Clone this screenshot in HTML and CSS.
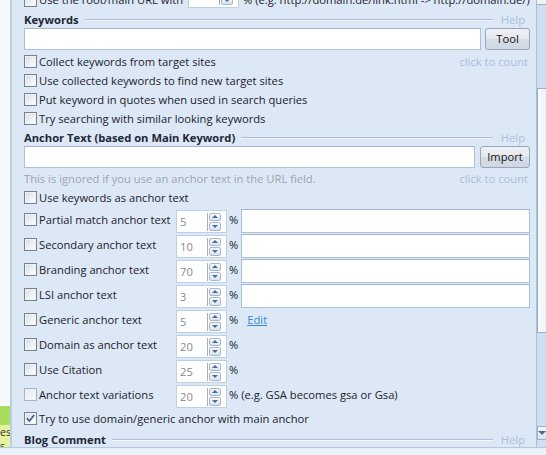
FILE: index.html
```html
<!DOCTYPE html>
<html lang="en">
<head>
    <meta charset="UTF-8">
    <title>Project Options - Data</title>
    <link rel="stylesheet" href="styles.css">
</head>
<body>
    <div class="window">
        <div class="side">
            <div class="side-green"></div>
            <div class="side-yellow">
                <span class="side-line">es</span>
                <span class="side-line">s</span>
            </div>
        </div>

        <div class="panel">
            <div class="scroll">
                <div class="top-row">
                    <label class="check top-label"><span class="box"></span>Use the root/main URL with</label>
                    <span class="spin spin-narrow">
                        <span class="spin-value">50</span>
                        <span class="spin-btns"><span class="spin-up"></span><span class="spin-down"></span></span>
                    </span>
                    <span class="top-hint">% (e.g. http://domain.de/link.html -&gt; http://domain.de/)</span>
                </div>

                <!-- Keywords -->
                <div class="section-head">
                    <span class="section-title">Keywords</span>
                    <span class="rule"></span>
                    <span class="help">Help</span>
                </div>
                <div class="field-row">
                    <input class="text-input" type="text">
                    <button class="btn">Tool</button>
                </div>
                <div class="check-row first-row">
                    <label class="check"><span class="box"></span>Collect keywords from target sites</label>
                    <span class="count">click to count</span>
                </div>
                <div class="check-row">
                    <label class="check"><span class="box"></span>Use collected keywords to find new target sites</label>
                </div>
                <div class="check-row">
                    <label class="check"><span class="box"></span>Put keyword in quotes when used in search queries</label>
                </div>
                <div class="check-row">
                    <label class="check"><span class="box"></span>Try searching with similar looking keywords</label>
                </div>

                <!-- Anchor text -->
                <div class="section-head head-gap">
                    <span class="section-title">Anchor Text (based on Main Keyword)</span>
                    <span class="rule"></span>
                    <span class="help">Help</span>
                </div>
                <div class="field-row field-wide-gap">
                    <input class="text-input" type="text">
                    <button class="btn btn-import">Import</button>
                </div>
                <div class="check-row note-row">
                    <span class="note">This is ignored if you use an anchor text in the URL field.</span>
                    <span class="count">click to count</span>
                </div>
                <div class="check-row">
                    <label class="check"><span class="box"></span>Use keywords as anchor text</label>
                </div>

                <div class="spin-row">
                    <label class="check"><span class="box"></span>Partial match anchor text</label>
                    <span class="spin"><span class="spin-value">5</span><span class="spin-btns"><span class="spin-up"></span><span class="spin-down"></span></span></span>
                    <span class="pct">%</span>
                    <input class="wide-input" type="text">
                </div>
                <div class="spin-row">
                    <label class="check"><span class="box"></span>Secondary anchor text</label>
                    <span class="spin"><span class="spin-value">10</span><span class="spin-btns"><span class="spin-up"></span><span class="spin-down"></span></span></span>
                    <span class="pct">%</span>
                    <input class="wide-input" type="text">
                </div>
                <div class="spin-row">
                    <label class="check"><span class="box"></span>Branding anchor text</label>
                    <span class="spin"><span class="spin-value">70</span><span class="spin-btns"><span class="spin-up"></span><span class="spin-down"></span></span></span>
                    <span class="pct">%</span>
                    <input class="wide-input" type="text">
                </div>
                <div class="spin-row">
                    <label class="check"><span class="box"></span>LSI anchor text</label>
                    <span class="spin"><span class="spin-value">3</span><span class="spin-btns"><span class="spin-up"></span><span class="spin-down"></span></span></span>
                    <span class="pct">%</span>
                    <input class="wide-input" type="text">
                </div>
                <div class="spin-row">
                    <label class="check"><span class="box"></span>Generic anchor text</label>
                    <span class="spin"><span class="spin-value">5</span><span class="spin-btns"><span class="spin-up"></span><span class="spin-down"></span></span></span>
                    <span class="pct">%</span>
                    <a class="link" href="#">Edit</a>
                </div>
                <div class="spin-row">
                    <label class="check"><span class="box"></span>Domain as anchor text</label>
                    <span class="spin"><span class="spin-value">20</span><span class="spin-btns"><span class="spin-up"></span><span class="spin-down"></span></span></span>
                    <span class="pct">%</span>
                </div>
                <div class="spin-row">
                    <label class="check"><span class="box"></span>Use Citation</label>
                    <span class="spin"><span class="spin-value">25</span><span class="spin-btns"><span class="spin-up"></span><span class="spin-down"></span></span></span>
                    <span class="pct">%</span>
                </div>
                <div class="spin-row">
                    <label class="check"><span class="box box-faint"></span>Anchor text variations</label>
                    <span class="spin"><span class="spin-value">20</span><span class="spin-btns"><span class="spin-up"></span><span class="spin-down"></span></span></span>
                    <span class="pct">% (e.g. GSA becomes gsa or Gsa)</span>
                </div>

                <div class="check-row checked-row">
                    <label class="check">
                        <span class="box">
                            <svg width="11" height="11" viewBox="0 0 11 11"><path d="M1.8 5.2 L4.4 8 L9.2 2" fill="none" stroke="#3a5d98" stroke-width="1.7"/></svg>
                        </span>Try to use domain/generic anchor with main anchor
                    </label>
                </div>

                <!-- Blog comment -->
                <div class="section-head blog-head">
                    <span class="section-title">Blog Comment</span>
                    <span class="rule"></span>
                    <span class="help">Help</span>
                </div>
            </div>
        </div>

        <div class="scrollbar">
            <div class="sb-up"></div>
            <div class="sb-track-top"></div>
            <div class="sb-thumb"></div>
            <div class="sb-track"></div>
            <div class="sb-down"><span class="sb-arrow"></span></div>
            <div class="sb-end"></div>
        </div>
    </div>
    <div class="bottom"></div>
</body>
</html>
```

FILE: styles.css
```css
* {
    margin: 0;
    padding: 0;
    box-sizing: border-box;
}

body {
    width: 546px;
    height: 455px;
    overflow: hidden;
    font-family: 'Open Sans', 'Noto Sans', sans-serif;
    font-size: 11.2px;
    line-height: 16px;
    color: #1c2129;
    background: #ebf1f9;
    display: flex;
    flex-direction: column;
}

.window {
    height: 447px;
    display: flex;
    overflow: hidden;
}

/* left strip (neighbouring list, mostly hidden) */
.side {
    width: 12px;
    background: #f6f8fc;
    border-right: 2px solid #bccde4;
    display: flex;
    flex-direction: column;
    justify-content: flex-end;
    overflow: hidden;
}

.side-green {
    height: 19px;
    background: #a8dc5c;
}

.side-yellow {
    height: 22px;
    background: #e5f29e;
    font-size: 10.5px;
    color: #2b2f20;
    display: flex;
    flex-direction: column;
    white-space: nowrap;
    overflow: hidden;
}

.side-line {
    height: 14px;
    line-height: 14px;
    flex: none;
    overflow: hidden;
}

.panel {
    flex: 1;
    background: #dde8f6;
    padding: 0 6px 0 12px;
    overflow: hidden;
}

.scroll {
    margin-top: -11px;
}

.top-row {
    height: 22px;
    display: flex;
    align-items: center;
}

.top-label {
    width: 164px;
}

.top-row .spin {
    margin: 0 0 8px 0;
}

.spin-narrow {
    width: 46px;
}

.top-hint {
    margin-left: 4px;
    white-space: nowrap;
}

/* section headers */
.section-head {
    height: 16px;
    margin-top: 1px;
    display: flex;
    align-items: center;
}

.head-gap {
    margin-top: 2px;
}

.blog-head {
    margin-top: 4px;
}

.section-title {
    font-weight: 700;
    color: #1d2736;
    white-space: nowrap;
}

.rule {
    flex: 1;
    height: 2px;
    border-top: 1px solid #a9c1de;
    border-bottom: 1px solid #f0f5fc;
    margin: 0 8px 0 6px;
}

.help {
    color: #a9bfdc;
    margin-right: 5px;
}

/* inputs and buttons */
.field-row {
    height: 22px;
    display: flex;
    gap: 4px;
}

.field-wide-gap {
    gap: 5px;
}

.text-input,
.wide-input {
    flex: 1;
    min-width: 0;
    height: 22px;
    border: 1px solid #abc1da;
    border-top-color: #9fb5d0;
    background: #fff;
    font: inherit;
    outline: none;
}

.btn {
    width: 45px;
    height: 22px;
    border: 1px solid #98a7ba;
    border-radius: 3px;
    background: linear-gradient(#eef1f5 0%, #e4e9ef 48%, #d6dde7 52%, #cfd7e2 100%);
    font: inherit;
    color: #141414;
    padding-bottom: 1px;
}

.btn-import {
    width: 50px;
}

/* checkbox rows */
.check-row {
    height: 19px;
    display: flex;
    align-items: center;
    justify-content: space-between;
}

.first-row {
    margin-top: 2px;
}

.note-row {
    margin-top: 1px;
}

.checked-row {
    margin-top: 2px;
}

.check {
    display: flex;
    align-items: center;
    gap: 2px;
    white-space: nowrap;
}

.box {
    width: 13px;
    height: 13px;
    flex: none;
    border: 1px solid #77838f;
    background: linear-gradient(135deg, #d6dde6 0%, #eef1f5 55%, #ffffff 100%);
    box-shadow: inset 0 0 0 1px #eef2f6;
    display: flex;
    align-items: center;
    justify-content: center;
}

.box-faint {
    border-color: #aab4c1;
    background: linear-gradient(135deg, #e6eaf0 0%, #f7f9fb 100%);
}

.count {
    color: #a8bedb;
    margin-right: 2px;
}

.note {
    color: #9ea5ad;
}

/* spin rows */
.spin-row {
    height: 25px;
    display: flex;
    align-items: flex-start;
}

.spin-row .check {
    width: 152px;
    height: 25px;
}

.spin {
    width: 51px;
    height: 23px;
    margin-top: 3px;
    border: 1px solid #bcd0e6;
    background: #fff;
    display: flex;
    align-items: center;
    padding: 0 5px 0 3px;
    flex: none;
}

.spin-value {
    flex: 1;
    color: #8a8a8a;
}

.spin-btns {
    width: 14px;
    height: 18px;
    border-left: 1px solid #9fb1c6;
    padding-left: 1px;
    display: flex;
    flex-direction: column;
    gap: 1px;
}

.spin-up,
.spin-down {
    flex: 1;
    border: 1px solid #a8b8cc;
    border-radius: 2px;
    background: linear-gradient(#f5f8fb, #d9e3ef);
    display: flex;
    align-items: center;
    justify-content: center;
}

.spin-up::after {
    content: '';
    border-left: 3px solid transparent;
    border-right: 3px solid transparent;
    border-bottom: 3px solid #4d6a91;
}

.spin-down::after {
    content: '';
    border-left: 3px solid transparent;
    border-right: 3px solid transparent;
    border-top: 3px solid #4d6a91;
}

.pct {
    line-height: 25px;
    margin-left: 2px;
    white-space: nowrap;
}

.wide-input {
    height: 24px;
    margin: 2px 0 0 3px;
}

.link {
    line-height: 25px;
    margin-left: 9px;
    color: #3788d6;
    text-decoration: underline;
}

/* vertical scrollbar, cut by the window edge */
.scrollbar {
    width: 10px;
    border-left: 1px solid #a9bdd6;
    background: #cfdef1;
    display: flex;
    flex-direction: column;
}

.sb-up {
    height: 5px;
    border-bottom: 1px solid #9cb0c9;
    background: #eef3f9;
}

.sb-track-top {
    height: 83px;
}

.sb-thumb {
    height: 245px;
    border: 1px solid #9cb0c9;
    border-right: none;
    background: linear-gradient(90deg, #f7f9fc, #eef3f9);
}

.sb-track {
    flex: 1;
}

.sb-down {
    height: 14px;
    border: 1px solid #9cb0c9;
    border-right: none;
    background: linear-gradient(#f4f7fb, #dbe5f1);
    display: flex;
    align-items: center;
    justify-content: center;
}

.sb-arrow {
    border-left: 4px solid transparent;
    border-right: 4px solid transparent;
    border-top: 4px solid #4d6a91;
}

.sb-end {
    height: 7px;
}

.bottom {
    flex: 1;
    border-top: 1px solid #b5c7de;
    background: #ebf1f9;
}
```
